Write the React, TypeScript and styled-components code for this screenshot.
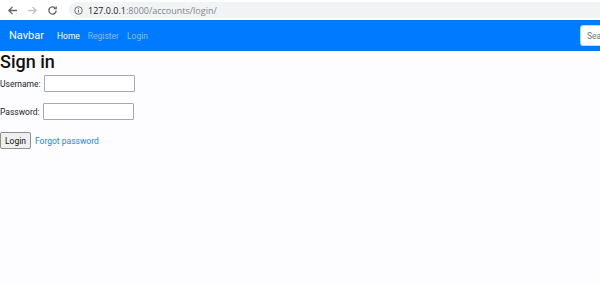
import React from "react";
import styled, { createGlobalStyle } from "styled-components";

const Global = createGlobalStyle`
  html, body { margin: 0; padding: 0; background: #fdfcfe; }
  body { font-family: Roboto, "Open Sans", sans-serif; color: #212529; }
`;

const Chrome = styled.div`
  height: 20px;
  background: #ffffff;
  display: flex;
  align-items: center;
  padding: 0 0 0 6px;
  gap: 7px;
  box-sizing: border-box;
`;

const IconBtn = styled.span`
  width: 13px;
  height: 13px;
  display: flex;
  align-items: center;
  justify-content: center;
`;

const UrlBar = styled.div`
  flex: 1;
  height: 16px;
  margin-left: 3px;
  background: #f1f3f4;
  border-radius: 8px 0 0 8px;
  display: flex;
  align-items: center;
  padding-left: 5px;
  gap: 5px;
  font-family: "Open Sans", sans-serif;
  font-size: 9px;
  color: #80868b;
`;

const Host = styled.span`
  color: #202124;
`;

const Nav = styled.nav`
  height: 31px;
  background: #007bff;
  display: flex;
  align-items: center;
  padding: 0 0 0 9px;
  box-sizing: border-box;
  overflow: hidden;
`;

const Brand = styled.a`
  color: #fff;
  font-size: 11px;
  margin-right: 13px;
  text-decoration: none;
`;

const NavLink = styled.a<{ $active?: boolean }>`
  color: ${(p) => (p.$active ? "#fff" : "rgba(255,255,255,0.5)")};
  font-size: 8.5px;
  margin-right: 8px;
  text-decoration: none;
`;

const Spacer = styled.div`
  flex: 1;
`;

const Search = styled.input`
  width: 40px;
  height: 21px;
  box-sizing: border-box;
  border: 1px solid #ced4da;
  border-radius: 3px;
  padding: 0 0 0 6px;
  font-family: inherit;
  font-size: 8.5px;
  margin-right: -20px;
  &::placeholder { color: #6c757d; }
`;

const Main = styled.main`
  display: flex;
  flex-direction: column;
`;

const Title = styled.h2`
  margin: 0;
  font-size: 18px;
  font-weight: 500;
  line-height: 22px;
  color: #111;
`;

const Row = styled.div<{ $mt: number }>`
  display: flex;
  align-items: center;
  gap: 3px;
  margin-top: ${(p) => p.$mt}px;
`;

const Label = styled.label`
  font-size: 8.5px;
  color: #212529;
`;

const Field = styled.input`
  width: 91px;
  height: 17px;
  box-sizing: border-box;
  border: 1px solid #a9a9a9;
  border-radius: 1px;
  background: #fff;
`;

const Button = styled.button`
  height: 17px;
  padding: 0 4px;
  font-family: inherit;
  font-size: 8.5px;
  color: #111;
  background: #efefef;
  border: 1px solid #8f8f8f;
  border-radius: 2px;
`;

const Link = styled.a`
  font-size: 8.5px;
  color: #1a86e0;
  text-decoration: none;
  margin-left: 1px;
`;

export default function App() {
  return (
    <>
      <Global />
      <Chrome>
        <IconBtn>
          <svg width="11" height="11" viewBox="0 0 12 12" fill="none" stroke="#5f6368" strokeWidth="1.4">
            <path d="M11 6H2M6 2L2 6l4 4" />
          </svg>
        </IconBtn>
        <IconBtn>
          <svg width="11" height="11" viewBox="0 0 12 12" fill="none" stroke="#bdc1c6" strokeWidth="1.4">
            <path d="M1 6h9M6 2l4 4-4 4" />
          </svg>
        </IconBtn>
        <IconBtn>
          <svg width="11" height="11" viewBox="0 0 12 12" fill="none" stroke="#5f6368" strokeWidth="1.4">
            <path d="M10 6a4 4 0 1 1-1.2-2.9" />
            <path d="M10 1.5v2.5H7.5" />
          </svg>
        </IconBtn>
        <UrlBar>
          <svg width="9" height="9" viewBox="0 0 10 10" fill="none" stroke="#5f6368" strokeWidth="1">
            <circle cx="5" cy="5" r="4.2" />
            <path d="M5 4.3v3M5 2.5v1" />
          </svg>
          <span>
            <Host>127.0.0.1</Host>:8000/accounts/login/
          </span>
        </UrlBar>
      </Chrome>
      <Nav>
        <Brand href="#">Navbar</Brand>
        <NavLink $active href="#">Home</NavLink>
        <NavLink href="#">Register</NavLink>
        <NavLink href="#">Login</NavLink>
        <Spacer />
        <Search placeholder="Search" />
      </Nav>
      <Main>
        <Title>Sign in</Title>
        <Row $mt={2}>
          <Label>Username:</Label>
          <Field type="text" />
        </Row>
        <Row $mt={11}>
          <Label>Password:</Label>
          <Field type="password" />
        </Row>
        <Row $mt={12}>
          <Button>Login</Button>
          <Link href="#">Forgot password</Link>
        </Row>
      </Main>
    </>
  );
}
